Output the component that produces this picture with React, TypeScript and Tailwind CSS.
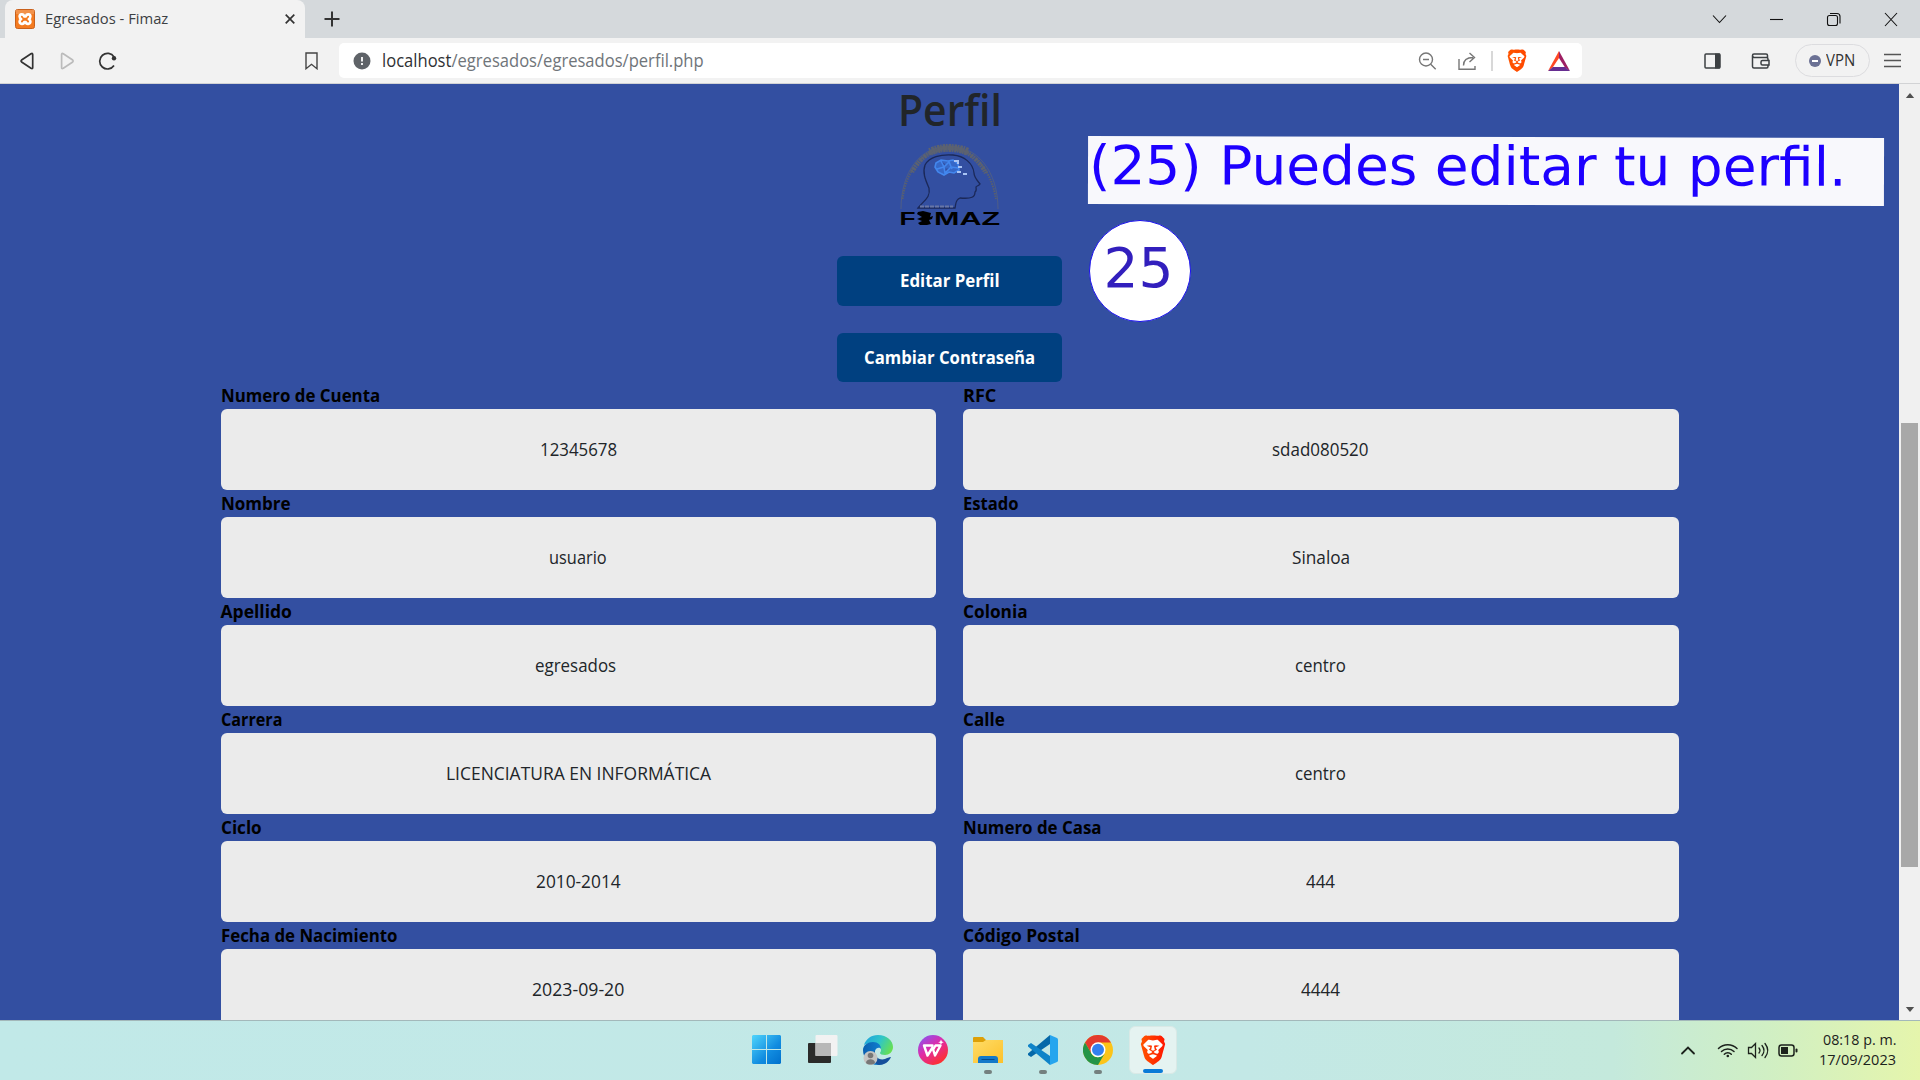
import React, { useLayoutEffect, useRef, useState } from "react";

/* Text scaled horizontally so that it takes a known width. */
function Fit({ w, children, className = "" }: { w: number; children: React.ReactNode; className?: string }) {
  const ref = useRef<HTMLSpanElement>(null);
  const [s, setS] = useState(1);
  useLayoutEffect(() => {
    if (ref.current) setS(w / ref.current.offsetWidth);
  }, [w]);
  return (
    <span className="inline-flex shrink-0 justify-start" style={{ width: w }}>
      <span ref={ref} className={`shrink-0 origin-left whitespace-pre ${className}`} style={{ transform: `scaleX(${s})` }}>
        {children}
      </span>
    </span>
  );
}

const LION =
  "M15.100 2.800 13.300.7S12 0 11.200.7c0 0-1.600-.3-3.200-.3S4.800.7 4.800.7C4 0 2.700.7 2.700.7L.9 2.800l.3 1.700L.5 6.300s1.800 7.400 2 8.400c.5 1.800.8 2.600 2.100 3.600S8 21 8 21s2.100-1.600 3.400-2.700 1.600-1.800 2.100-3.600c.200-1 2-8.400 2-8.400l-.7-1.800z";

function Brave({ id, className }: { id: string; className: string }) {
  return (
    <svg viewBox="0 0 16 21" preserveAspectRatio="none" className={className}>
      <defs>
        <linearGradient id={id}>
          <stop offset="0" stopColor="#ff5500" />
          <stop offset="1" stopColor={id === "b1" ? "#ff4800" : "#ff1500"} />
        </linearGradient>
      </defs>
      <path d={LION} fill={`url(#${id})`} />
      <path
        fill="#fff"
        d="M8 3.800c1 0 2.400-.4 2.900-.4L13.900 6.700c.2.500-.1 1-.6 1.600l-1.900 2c-.3.300-.1.600.1 1 .2.500 0 1.200-.5 1.600-.400.300-.900.200-1.200.1L8.700 12.300c-.3-.2-.3-.5 0-.8l1.700-1.100c.1-.2-.2-.5-.400-.9s-.4-.7-.3-1l2.300-1-2.200-.3-1.200.4.500 2.700c0 .3-.3.4-.6.500L8 10.900l-.5-.1c-.3-.1-.6-.2-.6-.5l.5-2.700-1.200-.4-2.200.3 2.300 1c.1.300-.1.600-.3 1s-.5.700-.4.900l1.700 1.100c.3.300.3.600 0 .8l-1.100.7c-.3.100-.8.200-1.200-.1-.5-.4-.7-1.100-.5-1.600.2-.4.400-.7.100-1l-1.900-2c-.5-.6-.8-1.100-.6-1.600L5.100 3.400c.5 0 1.900.4 2.900.4zM8 13.400c.4 0 2 .8 2.300 1 .2.100.1.300-.1.500L8.300 16.400c-.2.200-.4.200-.6 0L5.800 14.900c-.2-.2-.3-.4-.1-.5.3-.2 1.900-1 2.300-1z"
      />
    </svg>
  );
}

function TabStrip() {
  return (
    <div className="flex h-[38px] w-full bg-[#d5d9dc] pl-[5px]">
      <div className="flex w-[300px] items-center rounded-t-lg bg-[#f2f2f2] pl-2.5 pr-[10px]">
        <svg viewBox="0 0 20 20" className="size-5 shrink-0">
          <rect x=".5" y=".5" width="19" height="19" rx="2" fill="#f47b20" stroke="#c9611c" />
          <rect x="1" y="1" width="18" height="4" fill="#f2924b" />
          <g fill="none" stroke="#fff" strokeWidth="2.600" strokeLinejoin="round">
            <path d="M9.200 7.400C8.500 4.500 4.600 4.800 4.600 7.600c0 1.200.7 2 1.600 2.500-1 .5-1.600 1.300-1.600 2.500 0 2.900 4.300 3 4.700.4h1.400c.4 2.600 4.700 2.500 4.700-.4 0-1.200-.6-2-1.600-2.500.9-.5 1.600-1.300 1.600-2.500 0-2.800-3.900-3.100-4.600-.2z" />
          </g>
        </svg>
        <span className="relative -top-px ml-2.5 flex-1 text-[15px] text-[#3c4043]">
          <Fit w={123}>Egresados - Fimaz</Fit>
        </span>
        <svg viewBox="0 0 10 10" className="size-2.5">
          <path d="M.7.7l8.600 8.600M9.300.7.7 9.300" stroke="#333" strokeWidth="1.700" />
        </svg>
      </div>
      <svg viewBox="0 0 16 16" className="ml-[19px] mt-[11px] size-4">
        <path d="M8 .5v15M.5 8h15" stroke="#333" strokeWidth="2" />
      </svg>
      <svg viewBox="0 0 186 16" className="ml-auto mr-[22px] mt-[11px] h-4 w-[186px]" fill="none" stroke="#111" strokeWidth="1.100">
        <path d="M1 4.500l6.500 7 6.500-7" />
        <path d="M58 8.500h13" />
        <rect x="115.500" y="4.500" width="10" height="10" rx="2" />
        <path d="M118 2.500h7a3 3 0 0 1 3 3v7" />
        <path d="M173 2l12 13M185 2l-12 13" />
      </svg>
    </div>
  );
}

function Toolbar() {
  return (
    <div className="flex h-[46px] w-full items-center border-b border-[#d2d3d5] bg-[#f2f2f2] pl-5 pr-[19px]">
      <svg viewBox="0 0 97 18" className="h-[18px] w-[97px] shrink-0" fill="none" strokeWidth="1.700" strokeLinejoin="round">
        <path d="M11 1.700Q12.700.7 12.700 2.500v13Q12.700 17.300 11 16.300L1.600 10Q.6 9 1.600 8z" stroke="#333" />
        <path d="M43.300 1.700Q41.600.7 41.600 2.500v13q0 1.800 1.700.8L52.700 10q1-1 0-2z" stroke="#bbb" />
        <path d="M94 13.500A7.800 7.800 0 1 1 94.100 5" stroke="#333" />
        <circle cx="94" cy="6.300" r="2.200" fill="#333" />
      </svg>
      <svg viewBox="0 0 13 18" className="ml-[188px] h-[18px] w-[13px] shrink-0" fill="none">
        <path d="M1 1h11v15.700l-5.500-4.400L1 16.700z" stroke="#444" strokeWidth="1.400" />
      </svg>
      <div className="ml-[21px] flex h-[35px] w-[1243px] items-center rounded-[5px] bg-white pl-3.5 pr-3">
        <svg viewBox="0 0 18 18" className="size-[18px]">
          <circle cx="9" cy="9" r="8.500" fill="#5f6368" />
          <path d="M9 5v4.600M9 11v2" stroke="#fff" strokeWidth="1.800" />
        </svg>
        <span className="ml-[11px] flex-1 text-[17.500px] text-[#70757a]">
          <Fit w={322}>
            <span className="text-[#303134]">localhost</span>/egresados/egresados/perfil.php
          </Fit>
        </span>
        <svg viewBox="0 0 76 22" className="h-[22px] w-[76px]" fill="none" stroke="#777" strokeWidth="1.400">
          <circle cx="9" cy="9.500" r="6.500" />
          <path d="M6 9.500h6M13.700 14.300l5 5" />
          <path d="M42 9v10.300h16V16M46.500 15.500c0-5 3-8 9.500-8M52.500 3l5 4.500-5 4.500" />
          <path d="M75 1v20" stroke="#c8c8c8" />
        </svg>
        <Brave id="b1" className="ml-[14px] h-[23px] w-5" />
        <svg viewBox="0 0 22 20" className="ml-[21px] h-5 w-[22px]">
          <path d="M11 0v7L4.700 16.500 0 20z" fill="#ff4724" />
          <path d="M11 0l11 20-5-3.500L11 7z" fill="#9e1f63" />
          <path d="M0 20l5-4h12l5 4z" fill="#662d91" />
        </svg>
      </div>
      <svg viewBox="0 0 66 18" className="ml-auto h-[18px] w-[66px] shrink-0" fill="none" stroke="#3c4043" strokeWidth="1.500">
        <rect x="1" y="2" width="15" height="14" rx="1" />
        <path d="M13.500 1.500v15" strokeWidth="5" />
        <path d="M63.500 6V3.500q0-1.500-1.500-1.500H50q-1.500 0-1.500 1.500T50 5.500h12.500q1.500 0 1.500 1.500v7.500q0 1.500-1.500 1.500H50q-1.500 0-1.500-1.500V3.500" />
        <path d="M65 8.500h-6.500q-1.500 0-1.500 1.500v1.500q0 1.500 1.500 1.500H65z" fill="#f2f2f2" />
      </svg>
      <div className="ml-[25px] flex h-[33px] w-[75px] items-center rounded-full border border-[#dcdcdf] pl-[13px] text-[15.500px] text-[#333]">
        <span className="mr-[5px] flex size-3 items-center justify-center rounded-full bg-[#6b7194]">
          <span className="h-0.5 w-1.5 bg-white" />
        </span>
        <Fit w={29}>VPN</Fit>
      </div>
      <svg viewBox="0 0 17 15" className="ml-[14px] h-[15px] w-[17px] shrink-0">
        <path d="M0 1.500h17M0 7.500h17M0 13.500h17" stroke="#555" strokeWidth="1.400" />
      </svg>
    </div>
  );
}

function FimazLogo() {
  return (
    <svg viewBox="0 0 100 83" className="h-[83px] w-[100px] shrink-0 overflow-visible" fill="none">
      <path d="M1 66C1 28 21 3 49 3s49 25 49 63" stroke="#56617f" strokeWidth=".8" />
      <path d="M2.500 56C6 27 24 5 49 5s42 22 47 51" stroke="#59606f" strokeWidth="2" strokeDasharray="1.500 1" />
      <path d="M12 29C21 13 34 5 49 5s28 9 37 25" stroke="#5c6270" strokeWidth="4.500" strokeDasharray="1.500 .9 2.500 .7" />
      <path d="M30 9C36 6 42 5 49 5s13 1 19 4" stroke="#5c6270" strokeWidth="8" strokeDasharray="1.500 .9 2.500 .7" />
      <path
        d="M18 65c5-7 13-10 11-20-3-7-7-15-4-23C29 14 41 11 53 12c11 1 20 8 21 18 0 4 2 6 6 11-1 2-4 2-4 3s1 4-1 5c0 5-3 7-15 6-5 2-4 6-5 10z"
        stroke="#1b2858"
        strokeWidth="1.300"
      />
      <path d="M20 63.500h33" stroke="#6876a5" strokeWidth="2" strokeDasharray="4 1" />
      <path d="M36 20l5-3 7 1 5-1 5 4 1 6-5 3-5-1-5 3-6-3-3-5zM41 18l3 6 5-5 3 7M37 26l7-2 1 6 6-6 7 1" fill="#3668c8" stroke="#4387ee" strokeWidth="1.600" />
      <path d="M54 18h4v3M58 24h4M57 29h4M63 31h4" stroke="#a9c4f4" strokeWidth="2" />
      <g fill="#000" fontFamily="Liberation Sans" fontWeight="700" fontSize="17.500">
        <text x="-.5" y="81.500" textLength="16" lengthAdjust="spacingAndGlyphs">F</text>
        <text x="34" y="81.500" textLength="66" lengthAdjust="spacingAndGlyphs">MAZ</text>
      </g>
      <path d="M18 69l5-1 8 2-1 4 3-1-1 3-3 1 2 4-4 1h-7l-2-2 4-2-5-2 5-2-5-3z" fill="#000" />
    </svg>
  );
}

const left: [string, number, string, number][] = [
  ["Numero de Cuenta", 159, "12345678", 77],
  ["Nombre", 70, "usuario", 58],
  ["Apellido", 71, "egresados ", 86],
  ["Carrera", 61, "LICENCIATURA EN INFORMÁTICA", 265],
  ["Ciclo", 41, "2010-2014", 85],
  ["Fecha de Nacimiento", 176, "2023-09-20", 92],
];
const right: [string, number, string, number][] = [
  ["RFC", 33, "sdad080520", 97],
  ["Estado", 56, "Sinaloa", 58],
  ["Colonia", 65, "centro", 51],
  ["Calle", 42, "centro", 51],
  ["Numero de Casa", 139, "444", 29],
  ["Código Postal", 117, "4444", 39],
];

function Column({ fields }: { fields: [string, number, string, number][] }) {
  return (
    <div className="flex flex-1 flex-col">
      {fields.map(([label, lw, value, vw]) => (
        <div key={label} className="flex flex-col">
          <div className="h-[27px] text-[17.500px] font-bold leading-[27px] text-black">
            <Fit w={lw}>{label}</Fit>
          </div>
          <div className="flex h-[81px] items-center justify-center rounded-md bg-[#ebebeb] text-[17.500px] leading-[27px] text-[#212529]">
            <Fit w={vw}>{value}</Fit>
          </div>
        </div>
      ))}
    </div>
  );
}

function Page() {
  return (
    <div className="flex h-[936px] w-full overflow-hidden">
      <main className="relative flex h-full w-[1899px] flex-col items-center overflow-hidden bg-[#334fa1]">
        <h1 className="h-[59px] shrink-0 text-[44px] font-semibold leading-[50px] text-[#212529]">
          <Fit w={104}>Perfil</Fit>
        </h1>
        <FimazLogo />
        <button className="mt-[30px] h-[50px] w-[225px] shrink-0 rounded-md bg-[#004080] pb-px text-[17.500px] font-bold text-white">
          <Fit w={100}>Editar Perfil</Fit>
        </button>
        <button className="mt-[27px] h-[49px] w-[225px] shrink-0 rounded-md bg-[#004080] text-[17.500px] font-bold text-white">
          <Fit w={171}>Cambiar Contraseña</Fit>
        </button>
        <div className="flex w-[1458px] shrink-0 gap-[27px]">
          <Column fields={left} />
          <Column fields={right} />
        </div>
        <div className="absolute left-[1088px] top-[53px] flex h-[68px] w-[796px] rotate-[0.13deg] items-center bg-[#f8f8fc] pl-px font-['DejaVu_Sans'] text-[54px] leading-[68px] text-[#1d00ff]">
          <Fit w={757} className="relative -top-1">(25) Puedes editar tu perfil.</Fit>
        </div>
        <div className="absolute left-[1089px] top-[136px] flex size-[102px] items-center justify-center rounded-full border border-[#1a10ee] bg-white pb-1.5 pr-[3px] font-['DejaVu_Sans'] text-[55px] leading-none text-[#321fbd]">
          <Fit w={70}>25</Fit>
        </div>
      </main>
      <div className="flex h-full flex-1 flex-col items-center bg-[#f0f0f0]">
        <svg viewBox="0 0 10 6" className="mt-[9px] h-[5px] w-2.5"><path d="M0 6l5-6 5 6z" fill="#505050" /></svg>
        <div className="mt-[325px] h-[444px] w-[17px] bg-[#a8a8a8]" />
        <svg viewBox="0 0 10 6" className="mb-2 mt-auto h-[5px] w-2.5"><path d="M0 0l5 6 5-6z" fill="#505050" /></svg>
      </div>
    </div>
  );
}

function Dot() {
  return <span className="absolute bottom-0 left-1/2 h-1 w-2 -translate-x-1/2 rounded-full bg-[#74807f]" />;
}

function Taskbar() {
  return (
    <footer className="flex h-[60px] w-full items-center border-t border-[#a3b8ba] bg-[linear-gradient(90deg,#c1e9e8_0%,#c3e8e6_65%,#c4e9dc_84%,#d0efc4_92%,#e5f5ac_100%)] pb-px pr-6">
      <div className="ml-[752px] flex h-12 items-center">
        <svg viewBox="0 0 30 30" className="mr-[26px] size-[30px]">
          <defs>
            <linearGradient id="win" gradientUnits="userSpaceOnUse" x1="0" y1="0" x2="29" y2="29"><stop stopColor="#50d5fc" /><stop offset=".6" stopColor="#118ce0" /><stop offset="1" stopColor="#0070cc" /></linearGradient>
          </defs>
          <path d="M1 0h13v14H0V1zM15 0h13l1 1v13H15zM0 15h14v14H1l-1-1zM15 15h14v13l-1 1H15z" fill="url(#win)" />
        </svg>
        <svg viewBox="0 0 30 30" className="mr-[25px] size-[30px]">
          <rect y="8" width="23" height="20" rx="1" fill="#2b2b2a" />
          <rect x="7.500" y="0" width="22" height="21" rx="1" fill="#f2f2f2" />
          <rect x="7.500" y="8" width="15.500" height="13" fill="#b8b8b8" />
        </svg>
        <svg viewBox="0 0 30 30" className="mr-[25px] size-[30px]">
          <defs>
            <linearGradient id="eg" x1="0" x2="1" y1=".2" y2=".6"><stop stopColor="#1fa4dc" /><stop offset=".5" stopColor="#2fc5c9" /><stop offset="1" stopColor="#67e052" /></linearGradient>
            <linearGradient id="eb" x1="0" x2="1"><stop stopColor="#0a5fb0" /><stop offset="1" stopColor="#1490df" /></linearGradient>
          </defs>
          <path d="M1 10C3 4 8 0 15 0c9 0 15 6 15 12 0 5-4 8-8 8-3 0-5-1-5-2s1-1 1-3c0-3-3-6-7-6C6 8 3 9 1 10z" fill="url(#eg)" />
          <path d="M0 15c0-5 5-8 10-8 5 0 8 3 8 7-1-2-5-2-6 2-1 6 4 11 11 9 2 0 4-1 4-2-2 4-7 7-12 7C6 30 0 23 0 15z" fill="url(#eb)" />
          <path d="M12 16c-1 5 4 10 10 8 2-1 4-2 6-2-2 5-7 8-12 8-7-2-9-10-4-14z" fill="#154f9b" />
          <circle cx="7.500" cy="23" r="7" fill="#c5c5c3" />
          <circle cx="7.500" cy="20.500" r="2.800" fill="#777" />
          <path d="M3 28c0-5 9-5 9 0-2 2-7 2-9 0z" fill="#777" />
        </svg>
        <svg viewBox="0 0 30 30" className="mr-[25px] size-[30px]">
          <defs><linearGradient id="wps" x1="0" y1="0" x2=".7" y2="1"><stop stopColor="#7a5cff" /><stop offset=".5" stopColor="#df2ba8" /><stop offset="1" stopColor="#ff3028" /></linearGradient></defs>
          <circle cx="15" cy="15" r="15" fill="url(#wps)" />
          <path d="M14.500 10.500H6L9.500 20.500L14.500 12.500L17 20.500L22.500 10.500H17.500L15.500 14" fill="none" stroke="#fff" strokeWidth="2.400" strokeLinejoin="round" strokeLinecap="round" />
          <path d="M23 4.500l.8 2 2 .8-2 .8-.8 2-.8-2-2-.8 2-.8z" fill="#fff" />
        </svg>
        <div className="relative mr-[25px] flex h-12 w-[30px] items-center justify-center">
          <svg viewBox="0 0 30 30" className="size-[30px]">
            <defs><linearGradient id="fo" x1="0" y1="0" x2="1" y2="1"><stop stopColor="#ffdc68" /><stop offset="1" stopColor="#fdc12a" /></linearGradient></defs>
            <path d="M0 3q0-1 1-1h9l3 3h16q1 0 1 1v5H0z" fill="#dda008" />
            <path d="M0 7h10l3-2h17v23H0z" fill="url(#fo)" />
            <path d="M5 28v-4q0-3 3-3h14q3 0 3 3v4z" fill="#1479c9" />
            <path d="M8.500 24.500h13" stroke="#064b8d" />
          </svg>
          <Dot />
        </div>
        <div className="relative mr-[25px] flex h-12 w-[30px] items-center justify-center">
          <svg viewBox="0 0 30 30" className="size-[30px]">
            <path d="M0 20v-1.500L22 0v9L3 22z" fill="#0568a8" />
            <path d="M0 11.500V10l3-2L22 21v9z" fill="#0f83c8" />
            <path d="M22 0l7 3q1 .5 1 1.500v21q0 1-1 1.500l-7 3z" fill="#27a5ee" />
          </svg>
          <Dot />
        </div>
        <div className="relative mr-4 flex h-12 w-[30px] items-center justify-center">
          <svg viewBox="0 0 30 30" className="size-[30px]">
            <circle cx="15" cy="15" r="15" fill="#fcc419" />
            <path d="M2 7.500a15 15 0 0 1 26 0H15L8.500 18.700z" fill="#e33b2e" />
            <path d="M2 7.500l6.500 11.300c3 5 9 4.500 13 0L15 30A15 15 0 0 1 2 7.500z" fill="#249447" />
            <circle cx="15" cy="14.800" r="7.500" fill="#fff" />
            <circle cx="15" cy="14.800" r="6" fill="#3480ef" />
          </svg>
          <Dot />
        </div>
        <div className="relative flex size-12 items-center justify-center rounded-md border border-[#d9e9e6] bg-[#e5f3f1]">
          <Brave id="b2" className="h-[30px] w-[26px]" />
          <span className="absolute bottom-0 left-1/2 h-1 w-5 -translate-x-1/2 rounded-full bg-[#0a7bd7]" />
        </div>
      </div>
      <svg viewBox="0 0 118 22" className="ml-auto mr-[21px] h-[22px] w-[118px] shrink-0" fill="none" stroke="#1c221c" strokeWidth="1.500" strokeLinecap="round">
        <path d="M2 14.500l6-6 6 6" strokeWidth="1.800" />
        <path d="M38.500 9.500a13 13 0 0 1 18.500 0M41.500 12.500a9 9 0 0 1 12.500 0M44.300 15.300a5 5 0 0 1 7 0" />
        <circle cx="47.800" cy="17" r="1.300" fill="#1c221c" stroke="none" />
        <path d="M68.500 8.500h3l4-4v14l-4-4h-3zM79 9q2 2.500 0 5M82 6.500q4 5 0 10M85 4.500q5.500 7 0 14" strokeWidth="1.300" />
        <rect x="99" y="6" width="15" height="11" rx="2.500" />
        <rect x="101" y="8" width="7" height="7" fill="#1c221c" stroke="none" />
        <path d="M116.500 10.500v2" strokeWidth="2" />
      </svg>
      <div className="flex flex-col items-end text-[14.500px] leading-5 text-[#1c221c]">
        <Fit w={73}>08:18 p. m.</Fit>
        <Fit w={77}>17/09/2023</Fit>
      </div>
    </footer>
  );
}

export default function App() {
  return (
    <div className="flex h-[1080px] w-[1920px] flex-col overflow-hidden font-['Open_Sans','Noto_Sans',sans-serif]">
      <TabStrip />
      <Toolbar />
      <Page />
      <Taskbar />
    </div>
  );
}
